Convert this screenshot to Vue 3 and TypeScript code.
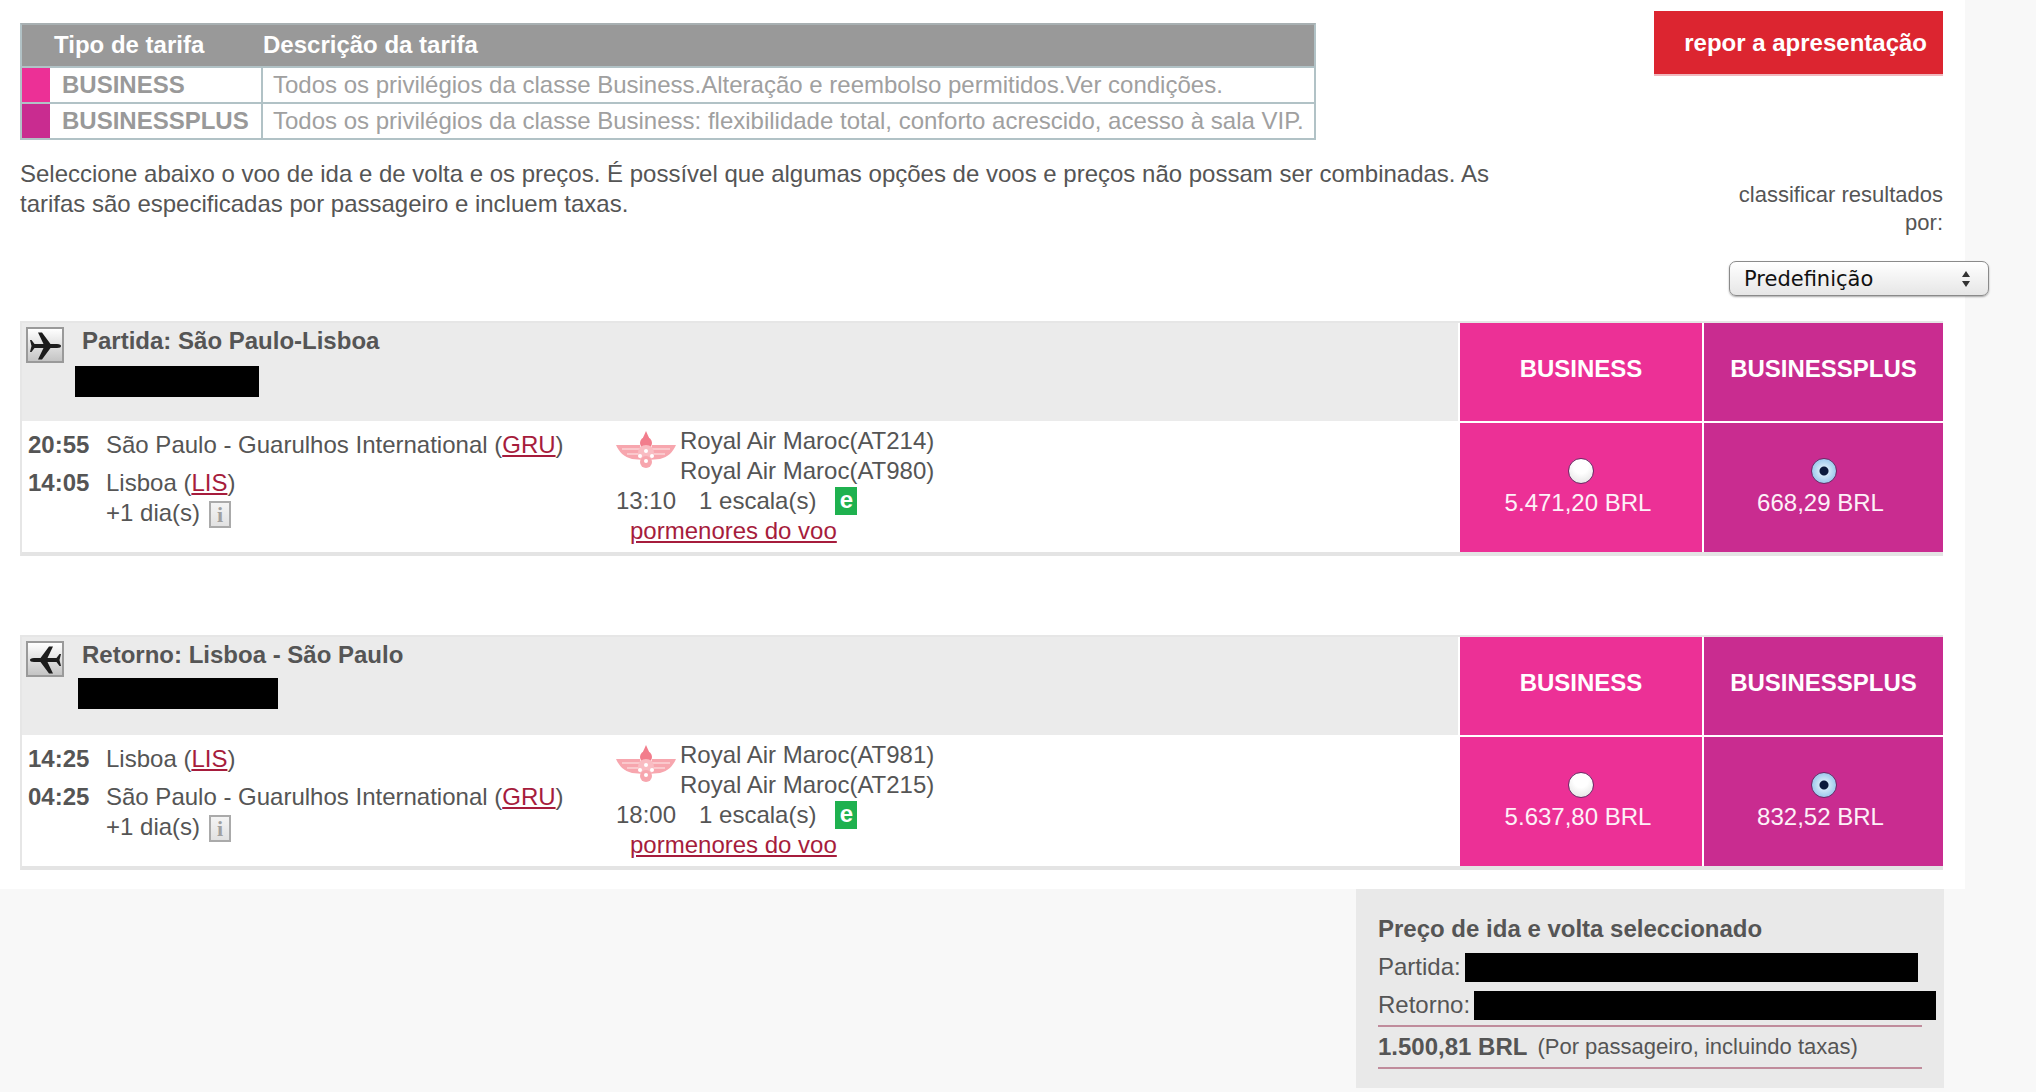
<script setup lang="ts">
interface Stop {
  time: string;
  city: string;
  code: string;
  nextDay?: boolean;
}

interface Flight {
  id: string;
  title: string;
  inbound: boolean;
  maskWidth: number;
  maskLeft: number;
  maskTop: number;
  stops: Stop[];
  carriers: string[];
  duration: string;
  prices: string[];
}

const fareTypes = [
  {
    name: "BUSINESS",
    color: "pink",
    text: "Todos os privilégios da classe Business.Alteração e reembolso permitidos.Ver condições.",
  },
  {
    name: "BUSINESSPLUS",
    color: "purple",
    text: "Todos os privilégios da classe Business: flexibilidade total, conforto acrescido, acesso à sala VIP.",
  },
];

const flights: Flight[] = [
  {
    id: "out",
    title: "Partida: São Paulo-Lisboa",
    inbound: false,
    maskWidth: 184,
    maskLeft: -7,
    maskTop: 10,
    stops: [
      { time: "20:55", city: "São Paulo - Guarulhos International", code: "GRU" },
      { time: "14:05", city: "Lisboa", code: "LIS", nextDay: true },
    ],
    carriers: ["Royal Air Maroc(AT214)", "Royal Air Maroc(AT980)"],
    duration: "13:10",
    prices: ["5.471,20 BRL", "668,29 BRL"],
  },
  {
    id: "back",
    title: "Retorno: Lisboa - São Paulo",
    inbound: true,
    maskWidth: 200,
    maskLeft: -4,
    maskTop: 8,
    stops: [
      { time: "14:25", city: "Lisboa", code: "LIS" },
      { time: "04:25", city: "São Paulo - Guarulhos International", code: "GRU", nextDay: true },
    ],
    carriers: ["Royal Air Maroc(AT981)", "Royal Air Maroc(AT215)"],
    duration: "18:00",
    prices: ["5.637,80 BRL", "832,52 BRL"],
  },
];
</script>

<template>
  <div class="page">
    <div class="sheet">
      <div class="top">
        <div class="legend">
          <div class="legend-head">
            <span class="col-type">Tipo de tarifa</span>
            <span class="col-desc">Descrição da tarifa</span>
          </div>
          <div v-for="fare in fareTypes" :key="fare.name" class="legend-row">
            <span class="swatch" :class="fare.color"></span>
            <strong class="fare-name">{{ fare.name }}</strong>
            <span class="fare-text">{{ fare.text }}</span>
          </div>
        </div>
        <button class="reset">repor a apresentação</button>
      </div>

      <div class="intro">
        <p>
          Seleccione abaixo o voo de ida e de volta e os preços. É possível que algumas opções de voos e preços não possam ser combinadas. As tarifas são especificadas por passageiro e incluem taxas.
        </p>
        <div class="sort">
          <label for="sort-by">classificar resultados por:</label>
          <div class="select-wrap">
            <select id="sort-by">
              <option>Predefinição</option>
            </select>
            <svg class="select-arrows" width="10" height="18" viewBox="0 0 10 18">
              <path d="M5 1 9 7H1zM5 17 1 11h8z" fill="#333" />
            </svg>
          </div>
        </div>
      </div>

      <section v-for="flight in flights" :key="flight.id" class="flight">
        <div class="flight-head">
          <span class="plane">
            <svg width="33" height="31" viewBox="0 0 33 31" :class="{ flip: flight.inbound }">
              <path
                d="M2.500 10 5.500 14H14.500L9 2.500H13L21.500 14H28C31 14 32 15 32 16S31 18 28 18H21.500L13 29.500H9L14.500 18H5.500L2.500 22H1L2.500 16 1 10z"
                fill="#1c1c1c"
              />
            </svg>
          </span>
          <div class="head-text">
            <h2>{{ flight.title }}</h2>
            <div
              class="mask"
              :style="{
                width: flight.maskWidth + 'px',
                marginLeft: flight.maskLeft + 'px',
                marginTop: flight.maskTop + 'px',
              }"
            ></div>
          </div>
        </div>
        <div class="fare-head pink">BUSINESS</div>
        <div class="fare-head purple">BUSINESSPLUS</div>

        <div class="flight-body">
          <div class="stops">
            <div v-for="stop in flight.stops" :key="stop.code" class="stop">
              <b>{{ stop.time }}</b>
              <div>
                <div>{{ stop.city }} (<a href="#">{{ stop.code }}</a>)</div>
                <div v-if="stop.nextDay" class="next-day">
                  +1 dia(s)
                  <span class="info">i</span>
                </div>
              </div>
            </div>
          </div>
          <div class="carrier">
            <div class="carrier-top">
              <svg class="logo" width="60" height="38" viewBox="0 0 60 38">
                <path d="M30 0 34 9H26z" fill="#f27d8c" />
                <circle cx="30" cy="12" r="6" fill="#f27d8c" />
                <path d="M0 14H24L28 29 16 28C8 26 3 21 0 14z" fill="#f7a6ae" />
                <path d="M60 14H36L32 29 44 28C52 26 57 21 60 14z" fill="#f7a6ae" />
                <path d="M6 18H24M11 23H24M36 18H54M36 23H49" stroke="#fbd3d6" stroke-width="1.500" />
                <circle cx="30" cy="22" r="8" fill="#f9bcc2" />
                <circle cx="30" cy="31" r="6" fill="#f7a6ae" />
                <circle cx="30" cy="20" r="2" fill="#fff" />
                <circle cx="24" cy="25" r="2" fill="#fff" />
                <circle cx="36" cy="25" r="2" fill="#fff" />
                <circle cx="30" cy="30" r="2" fill="#fff" />
              </svg>
              <div>
                <div v-for="carrier in flight.carriers" :key="carrier">{{ carrier }}</div>
              </div>
            </div>
            <div class="duration">
              <span>{{ flight.duration }}</span>
              <span>1 escala(s)</span>
              <span class="e-badge">e</span>
            </div>
            <a class="details" href="#">pormenores do voo</a>
          </div>
        </div>

        <div
          v-for="(price, i) in flight.prices"
          :key="price"
          class="fare-cell"
          :class="i === 0 ? 'pink' : 'purple'"
        >
          <input type="radio" :name="flight.id" :checked="i === 1" />
          <span>{{ price }}</span>
        </div>
      </section>
    </div>

    <div class="total-box">
      <h3>Preço de ida e volta seleccionado</h3>
      <div class="sum-line">Partida:<i class="sum-mask first"></i></div>
      <div class="sum-line">Retorno:<i class="sum-mask second"></i></div>
      <div class="sum-total"><b>1.500,81 BRL</b><span>(Por passageiro, incluindo taxas)</span></div>
    </div>
  </div>
</template>

<style>
html,
body {
  margin: 0;
  background: #f8f8f8;
}
</style>

<style scoped>
.page {
  color: #555;
  font-family: "Liberation Sans", Arial, sans-serif;
  font-size: 24px;
}

.sheet {
  box-sizing: border-box;
  width: 1965px;
  height: 889px;
  padding: 0 22px 0 20px;
  background: #fff;
}

.top {
  display: flex;
  justify-content: space-between;
  align-items: flex-start;
}

.legend {
  width: 1296px;
  margin-top: 23px;
  border: 2px solid #b1c2c6;
  border-top-color: #a8b0b2;
  box-sizing: border-box;
}

.legend-head {
  display: flex;
  height: 41px;
  padding-bottom: 2px;
  box-sizing: border-box;
  align-items: center;
  background: #999;
  color: #fff;
  font-weight: 700;
}

.col-type {
  width: 211px;
  padding-left: 32px;
  box-sizing: border-box;
}

.col-desc {
  padding-left: 30px;
}

.legend-row {
  display: flex;
  height: 34px;
  align-items: center;
  border-top: 2px solid #b1c2c6;
  color: #a0a0a0;
}

.swatch {
  width: 28px;
  height: 100%;
  margin-right: 12px;
}

.fare-name {
  width: 199px;
  line-height: 34px;
  border-right: 2px solid #b1c2c6;
  font-weight: 700;
  color: #999;
}

.fare-text {
  padding-left: 10px;
  white-space: nowrap;
}

.pink {
  background: #ec3096;
}

.purple {
  background: #c92c90;
}

.reset {
  width: 289px;
  height: 65px;
  margin-top: 11px;
  border: 0;
  border-bottom: 2px solid #f0b8be;
  background: #dc2530;
  color: #fff;
  font: 700 24px "Liberation Sans", Arial, sans-serif;
  text-align: right;
  padding: 0 16px 0 0;
}

.intro {
  display: flex;
  justify-content: space-between;
  height: 181px;
}

.intro p {
  width: 1490px;
  margin: 0;
  padding-top: 19px;
  line-height: 30px;
}

.sort {
  width: 260px;
  margin-right: -46px;
  padding-top: 41px;
  font-size: 22px;
}

.sort label {
  display: block;
  width: 214px;
  text-align: right;
  line-height: 28px;
}

.select-wrap {
  position: relative;
  width: 260px;
  height: 35px;
  margin-top: 24px;
}

.select-wrap select {
  appearance: none;
  box-sizing: border-box;
  width: 100%;
  height: 100%;
  padding: 0 0 0 14px;
  border: 1px solid #8a8a8a;
  border-radius: 7px;
  background: linear-gradient(#fff, #e6e6e6);
  box-shadow: 0 1px 2px rgba(0, 0, 0, 0.35);
  color: #111;
  font: 21px "DejaVu Sans", sans-serif;
}

.select-arrows {
  position: absolute;
  top: 9px;
  right: 18px;
}

.flight {
  display: grid;
  grid-template-columns: 1436px 242px 239px;
  grid-template-rows: 98px 129px;
  gap: 2px;
  box-sizing: border-box;
  width: 1923px;
  height: 235px;
  margin-bottom: 79px;
  border-top: 2px solid #e6e6e6;
  border-left: 2px solid #e6e6e6;
  border-bottom: 4px solid #e4e4e4;
}

.flight:last-of-type {
  margin-bottom: 0;
}

.flight-head {
  display: flex;
  background: #ebebeb;
}

.plane {
  box-sizing: border-box;
  display: flex;
  align-items: center;
  justify-content: center;
  width: 38px;
  height: 36px;
  margin: 4px 0 0 4px;
  border: 2px solid #9a9a9a;
  background: linear-gradient(#fff, #c4c4c4);
}

.plane svg {
  filter: blur(0.4px);
}

.plane svg.flip {
  transform: scaleX(-1);
}

.head-text {
  margin-left: 18px;
}

.head-text h2 {
  margin: 3px 0 0;
  color: #555;
  font-size: 24px;
  line-height: 30px;
}

.mask {
  height: 31px;
  background: #000;
}

.fare-head {
  display: flex;
  align-items: center;
  justify-content: center;
  padding-bottom: 6px;
  color: #fff;
  font-weight: 700;
}

.flight-body {
  display: flex;
  background: #fff;
}

.stops {
  width: 594px;
  padding: 7px 0 0 6px;
  box-sizing: border-box;
}

.stop {
  display: grid;
  grid-template-columns: 78px 1fr;
  line-height: 30px;
  margin-bottom: 8px;
}

.stop b {
  color: #555;
}

.next-day {
  display: flex;
  align-items: center;
  gap: 9px;
}

.info {
  box-sizing: border-box;
  display: flex;
  align-items: center;
  justify-content: center;
  width: 22px;
  height: 27px;
  margin-top: 3px;
  border: 2px solid #aaa;
  background: linear-gradient(#f4f4f4, #e2e2e2);
  color: #a0a0a0;
  font: 700 22px "Liberation Serif", serif;
}

a {
  color: #a61c3c;
}

.carrier {
  padding-top: 3px;
  line-height: 30px;
}

.carrier-top {
  display: flex;
  gap: 4px;
}

.logo {
  margin-top: 5px;
  filter: blur(0.7px);
}

.duration {
  display: flex;
  align-items: center;
  gap: 23px;
}

.e-badge {
  display: flex;
  align-items: center;
  justify-content: center;
  width: 22px;
  height: 28px;
  margin-left: -4px;
  padding-bottom: 3px;
  box-sizing: border-box;
  background: #1fb14f;
  color: #fff;
  font-weight: 700;
}

.details {
  display: block;
  margin-left: 14px;
}

.fare-cell {
  display: flex;
  flex-direction: column;
  align-items: center;
  padding-top: 35px;
  box-sizing: border-box;
  color: #fdf1f8;
}

.fare-cell span {
  margin: 4px 6px 0 0;
  line-height: 30px;
}

.fare-cell input {
  appearance: none;
  box-sizing: border-box;
  width: 26px;
  height: 26px;
  margin: 0;
  border: 1px solid #6a2a66;
  border-radius: 50%;
  background: radial-gradient(circle at 50% 30%, #fff 35%, #dedede);
}

.fare-cell input:checked {
  background: radial-gradient(circle, #0a1a3c 0 4px, #cfe6f7 5px, #79b6e6);
}

.total-box {
  box-sizing: border-box;
  width: 588px;
  height: 199px;
  margin-left: 1356px;
  padding: 25px 22px 0 22px;
  background: #e9e9e9;
}

.total-box h3 {
  margin: 0 0 4px;
  font-size: 24px;
  line-height: 30px;
}

.sum-line {
  display: flex;
  align-items: center;
  height: 38px;
  font-size: 24px;
}

.sum-mask {
  display: block;
  flex: none;
  height: 29px;
  background: #000;
}

.sum-mask.first {
  width: 453px;
  margin-left: 4px;
}

.sum-mask.second {
  width: 462px;
  margin-left: 4px;
}

.sum-total {
  display: flex;
  align-items: center;
  gap: 10px;
  height: 40px;
  margin-top: 1px;
  border-top: 2px solid #c08c9c;
  border-bottom: 2px solid #c08c9c;
  font-size: 22px;
}

.sum-total b {
  font-size: 24px;
}
</style>
